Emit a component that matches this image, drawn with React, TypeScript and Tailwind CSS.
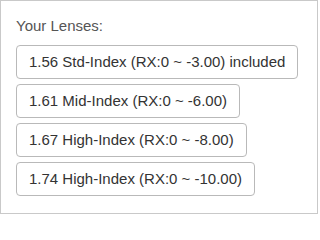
import React from "react";

const lenses = [
  "1.56 Std-Index (RX:0 ~ -3.00) included",
  "1.61 Mid-Index (RX:0 ~ -6.00)",
  "1.67 High-Index (RX:0 ~ -8.00)",
  "1.74 High-Index (RX:0 ~ -10.00)",
];

export default function App() {
  return (
    <div
      className="w-[318px] h-[214px] border border-[#c9c9c9] bg-white pt-[15px] pl-[15px]"
      style={{ fontFamily: '"Liberation Sans", Arial, sans-serif' }}
    >
      <div className="text-[15px] leading-[20px] text-[#555]">Your Lenses:</div>
      <div className="mt-[9px] flex flex-col items-start gap-[5px]">
        {lenses.map((l) => (
          <div
            key={l}
            className="border border-[#b9b9b9] rounded-[4px] px-[12px] py-[6px] text-[15px] leading-[20px] text-[#333] bg-white whitespace-nowrap"
          >
            {l}
          </div>
        ))}
      </div>
    </div>
  );
}
